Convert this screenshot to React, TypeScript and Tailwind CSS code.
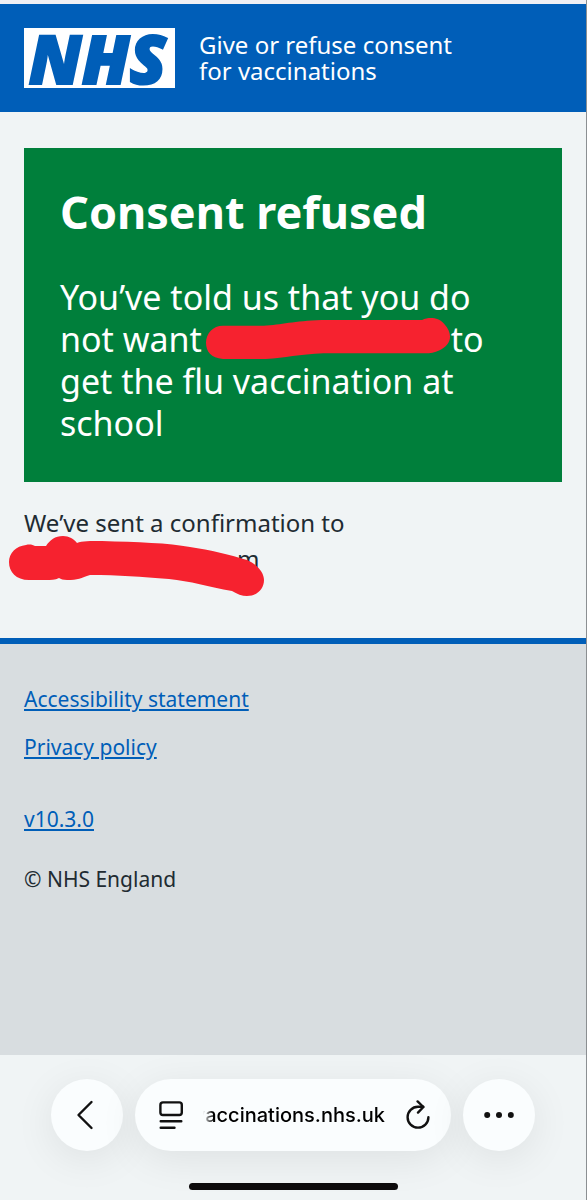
const footerLinks = ["Accessibility statement", "Privacy policy"];

function Header() {
  return (
    <header className="border-t-4 border-[#f0f0f4] bg-[#005eb8]">
      <div className="flex items-center gap-6 px-6 py-6">
        <a
          href="#home"
          aria-label="NHS home"
          className="flex h-[60px] w-[151px] shrink-0 items-center justify-center bg-white pr-1 font-['Open_Sans',sans-serif] text-[67px] leading-[60px] font-extrabold text-[#005eb8] italic [-webkit-text-stroke:2px_#005eb8]"
        >
          NHS
        </a>
        <a href="#service" className="max-w-[264px] text-[24px] leading-[26px] text-white">
          Give or refuse consent for vaccinations
        </a>
      </div>
    </header>
  );
}

function NameRedaction() {
  return (
    <svg
      viewBox="0 0 246 44"
      className="ml-1 inline-block h-[42px] w-[245px] align-top"
      preserveAspectRatio="none"
      aria-hidden="true"
    >
      <path
        d="M17 8H58C76 7 88 3 116 2H217C224 -1 233 -1 239 6C249 17 246 29 234 34C230 36 225 37 220 37H118C93 38 80 42 60 43H17C5 42 0 35 0 26C0 16 7 8 17 8Z"
        fill="#f6222f"
      />
    </svg>
  );
}

function EmailRedaction() {
  return (
    <svg
      viewBox="0 0 256 62"
      className="absolute -top-1.5 -left-[15px] h-[62px] w-[256px]"
      aria-hidden="true"
    >
      <path
        d="M17 10C21 9 24 10 26 11H37C41 5 46 1 54 1C60 1 65 4 68 8C73 6 81 6 93 6C128 7 160 8 181 12C201 15 222 20 238 25C249 30 255 38 255 45C255 54 248 61 238 61C233 61 228 59 223 56C200 52 181 46 160 44C132 42 110 40 81 40C72 43 69 45 58 45C54 45 52 44 50 43C46 45 42 45 37 45H20C7 45 0 37 0 27C0 18 7 11 17 10Z"
        fill="#f6222f"
      />
    </svg>
  );
}

function Toolbar() {
  const round =
    "flex size-[72px] shrink-0 items-center justify-center rounded-full bg-[#fafdfe] shadow-[0_8px_40px_rgba(0,0,0,0.08)]";
  return (
    <nav aria-label="Browser" className="flex flex-col items-center bg-[#f0f4f5] pt-6 pb-[10px]">
      <div className="flex w-full gap-3 px-[51px]">
        <button aria-label="Back" className={round}>
          <svg viewBox="0 0 32 32" className="size-8" fill="none" stroke="#111" strokeWidth="2.4" strokeLinecap="round" strokeLinejoin="round" aria-hidden="true">
            <path d="M20.5 3L7.5 16L20.5 29" />
          </svg>
        </button>
        <div className="flex h-[72px] min-w-0 flex-1 items-center rounded-full bg-[#fafdfe] pr-5 pl-6 shadow-[0_8px_40px_rgba(0,0,0,0.08)]">
          <button aria-label="Page menu" className="shrink-0">
            <svg viewBox="0 0 24 30" className="h-[30px] w-6" fill="none" stroke="#111" strokeWidth="2.4" strokeLinecap="round" aria-hidden="true">
              <rect x="1.4" y="2.4" width="21.4" height="12.6" rx="2.5" />
              <path d="M1.7 21.2H22.3M1.7 27.7H15.5" />
            </svg>
          </button>
          <button className="ml-4 flex min-w-0 flex-1 justify-end overflow-hidden font-[Inter,sans-serif] text-[20px] leading-7 font-medium text-black [mask-image:linear-gradient(to_right,transparent_4px,black_14px)]">
            vaccinations.nhs.uk
          </button>
          <button aria-label="Reload" className="ml-5 shrink-0">
            <svg viewBox="0 0 26 30" className="h-[30px] w-[26px]" fill="none" stroke="#111" strokeWidth="2.4" strokeLinecap="round" strokeLinejoin="round" aria-hidden="true">
              <path d="M23.4 17.2A10.4 10.4 0 1 1 13 6.8H18.2" />
              <path d="M12.6 1.4L18.4 7L13 12.6" />
            </svg>
          </button>
        </div>
        <button aria-label="More" className={round}>
          <svg viewBox="0 0 30 8" className="h-2 w-[30px]" fill="#111" aria-hidden="true">
            <circle cx="3.2" cy="4" r="3" />
            <circle cx="15" cy="4" r="3" />
            <circle cx="26.8" cy="4" r="3" />
          </svg>
        </button>
      </div>
      <div className="mt-8 h-[7px] w-[209px] rounded-full bg-[#0d0b0c]" />
    </nav>
  );
}

export default function App() {
  return (
    <div className="flex min-h-screen flex-col overflow-hidden border-r border-[#8b8f92] bg-[#f0f4f5] font-['Noto_Sans',sans-serif] text-[#212b32]">
      <Header />
      <main className="px-6 pt-9 pb-[61px]">
        <section className="bg-[#007f3b] px-9 pt-9 pb-[38px] text-white">
          <h1 className="text-[45px] leading-[56px] font-bold">Consent refused</h1>
          <p className="mt-9 max-w-[440px] text-[34px] leading-[42px]">
            You’ve told us that you do not want
            <NameRedaction />
            to get the flu vaccination at school
          </p>
        </section>
        <div className="mt-[23px] text-[24px] leading-9">
          <p>We’ve sent a confirmation to</p>
          <p className="relative pl-[213px]">
            m
            <EmailRedaction />
          </p>
        </div>
      </main>
      <footer className="flex-1 border-t-[6px] border-[#005eb8] bg-[#d8dde0] px-6 pt-10 text-[21px] leading-[30px]">
        <ul className="flex flex-col gap-[18px]">
          {footerLinks.map((label) => (
            <li key={label}>
              <a href="#info" className="text-[#005eb8] underline underline-offset-2">
                {label}
              </a>
            </li>
          ))}
        </ul>
        <p className="mt-[42px]">
          <a href="#version" className="text-[#005eb8] underline underline-offset-2">
            v10.3.0
          </a>
        </p>
        <p className="mt-[30px]">© NHS England</p>
      </footer>
      <Toolbar />
    </div>
  );
}
